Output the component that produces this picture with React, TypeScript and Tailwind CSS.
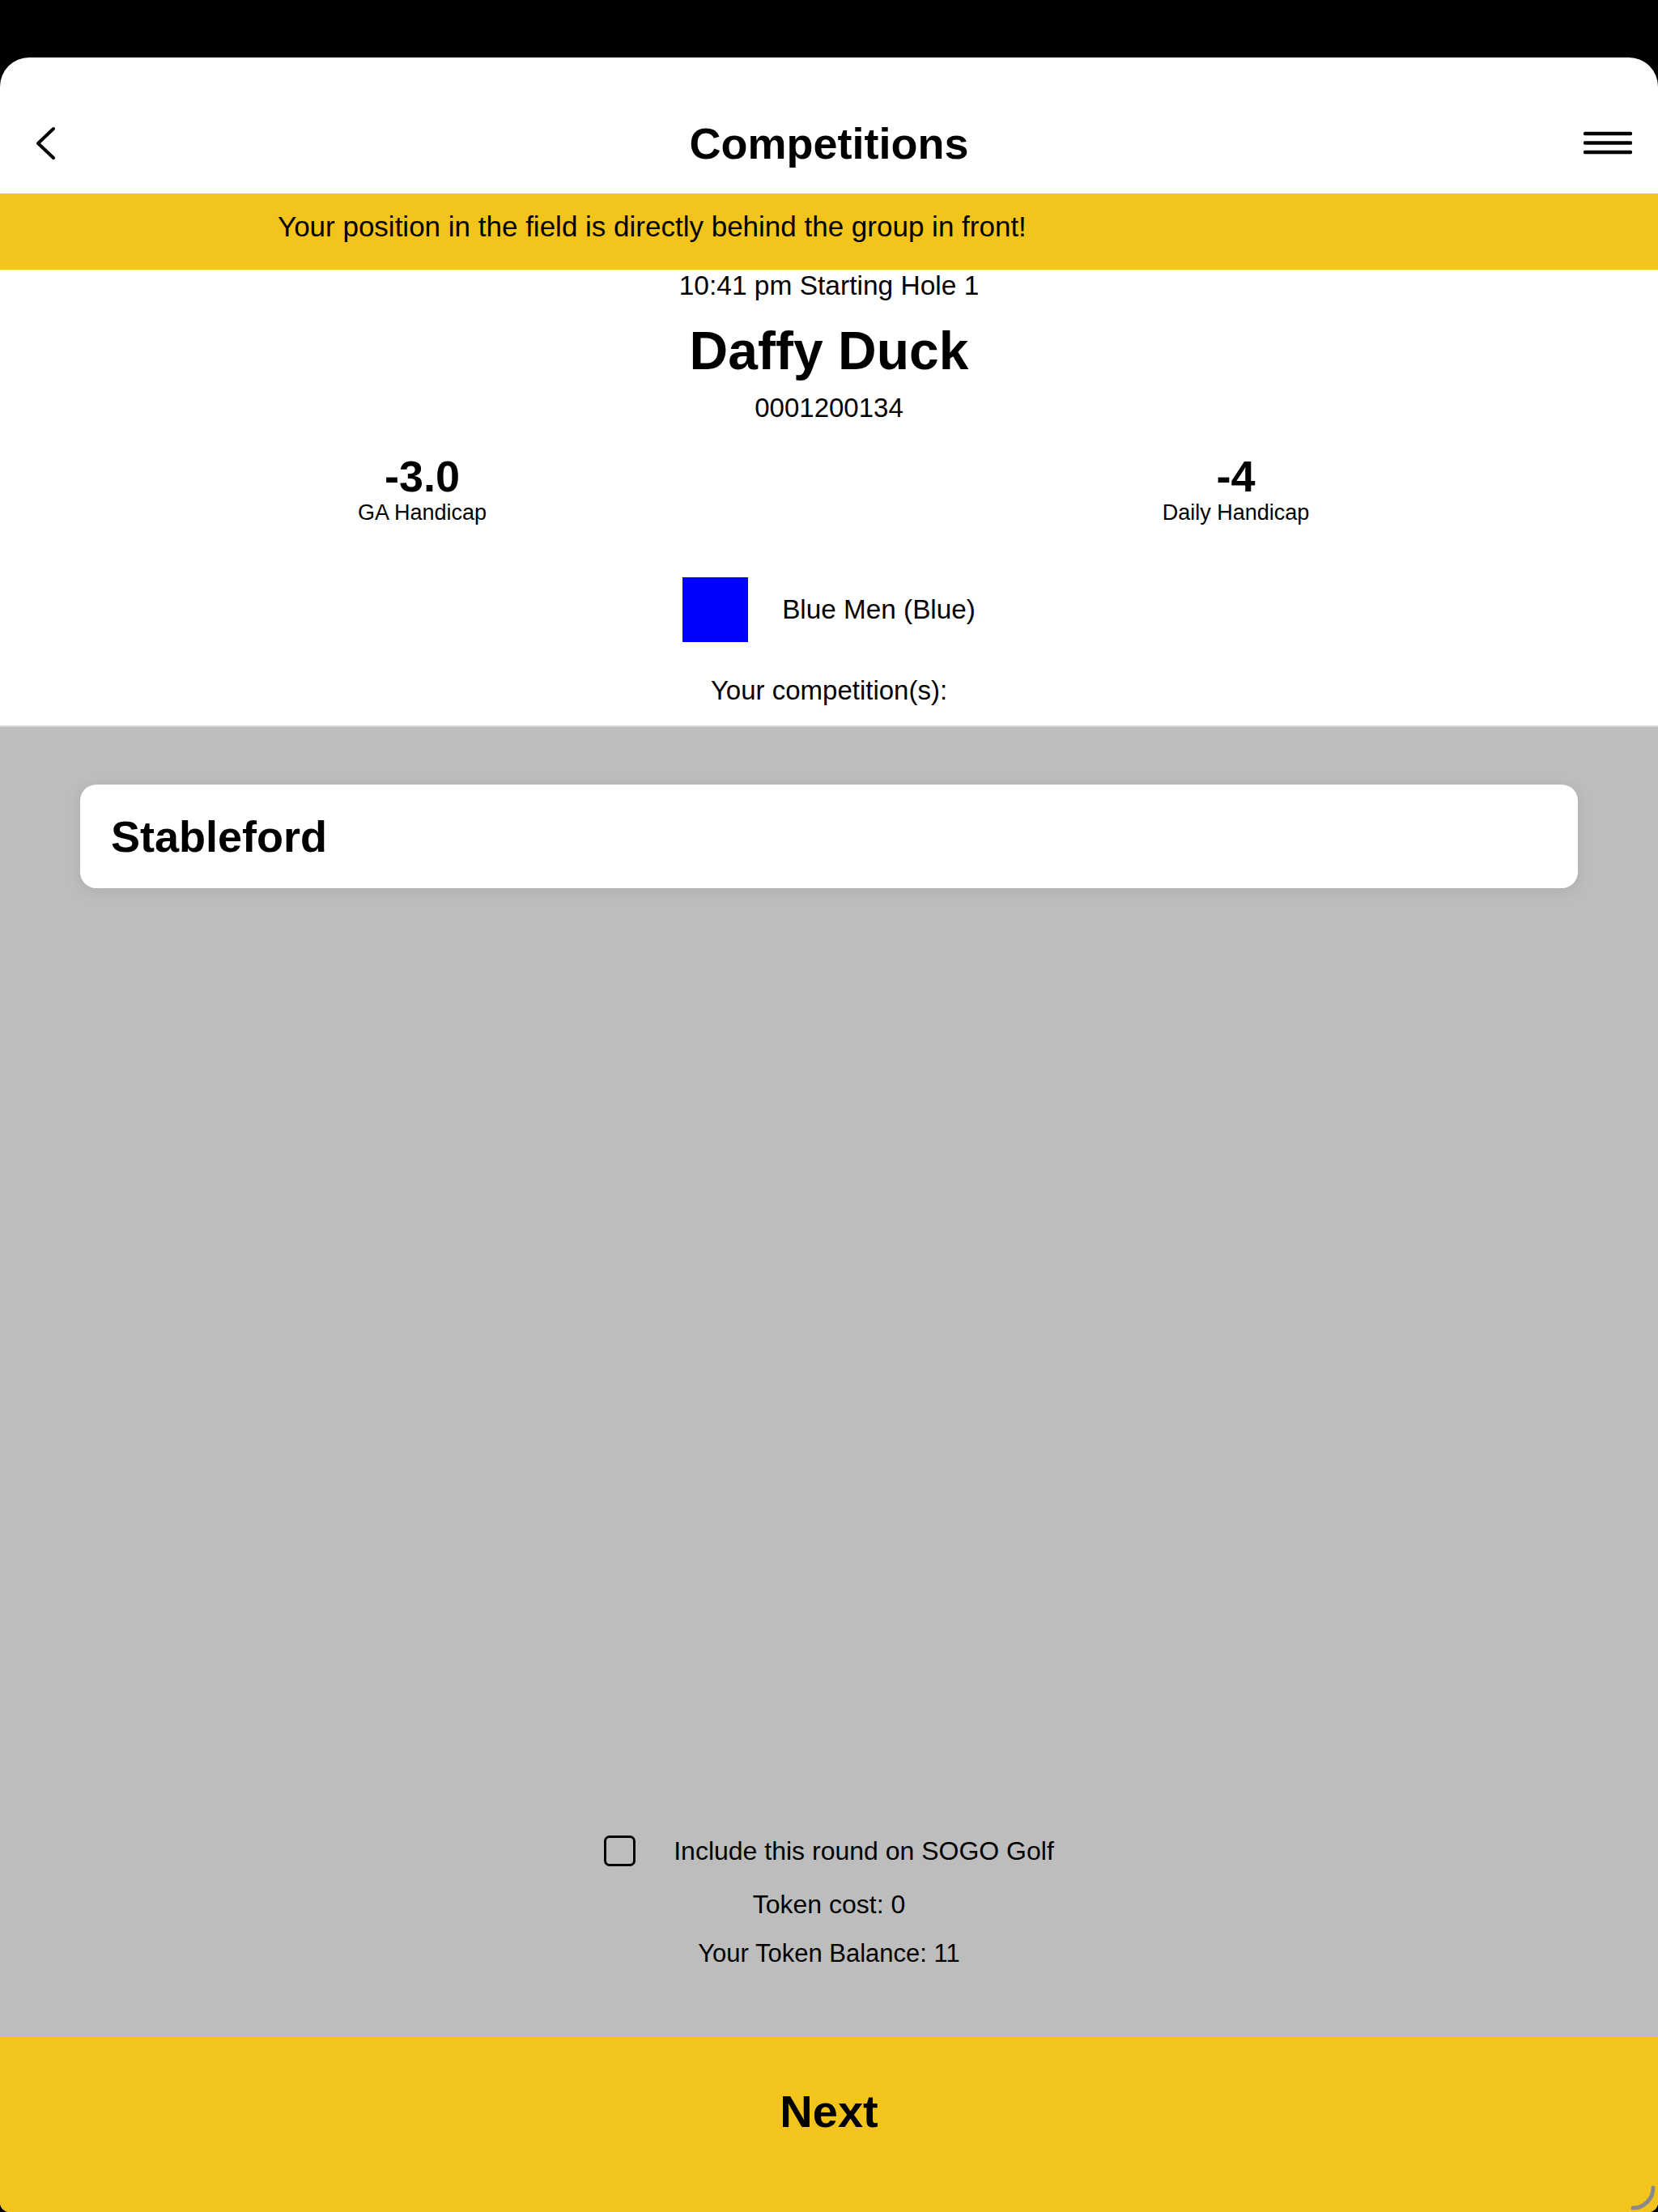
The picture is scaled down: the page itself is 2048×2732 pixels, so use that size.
import { useState } from "react";

const font = { fontFamily: '"Liberation Sans", Arial, sans-serif' };

const App = () => {
  const [includeSogo, setIncludeSogo] = useState(false);

  return (
    <div className="h-screen bg-black flex flex-col pt-[71px] text-black" style={font}>
      <div className="relative flex-1 flex flex-col bg-white rounded-t-[36px] rounded-b-[12px] overflow-hidden">
        {/* header */}
        <div className="h-[168px] pt-[44px] grid grid-cols-[1fr_auto_1fr] items-center">
          <button className="justify-self-start pl-[44px]">
            <svg width="26" height="42" viewBox="0 0 26 42" fill="none" stroke="black" strokeWidth="4" strokeLinecap="round" strokeLinejoin="round">
              <polyline points="22,3 3,21 22,39" />
            </svg>
          </button>
          <h1 className="text-[54px] leading-[64px] font-bold">Competitions</h1>
          <button className="justify-self-end pr-[32px]">
            <svg width="60" height="32" viewBox="0 0 60 32" fill="none" stroke="black" strokeWidth="4.5" strokeLinecap="round">
              <line x1="2" y1="4" x2="58" y2="4" />
              <line x1="2" y1="15.5" x2="58" y2="15.5" />
              <line x1="2" y1="27" x2="58" y2="27" />
            </svg>
          </button>
        </div>

        {/* field position banner */}
        <div className="h-[94px] bg-[#f3c41c] flex items-center pl-[343px] pb-[12px]">
          <p className="text-[35px] leading-[40px]">Your position in the field is directly behind the group in front!</p>
        </div>

        {/* player info */}
        <div className="h-[563px] flex flex-col items-center">
          <p className="text-[33.5px] leading-[40px]">10:41 pm Starting Hole 1</p>
          <h2 className="mt-[20px] text-[66px] leading-[80px] font-bold">Daffy Duck</h2>
          <p className="mt-[11px] text-[33px] leading-[40px]">0001200134</p>

          <div className="mt-[44px] w-full px-[19px] grid grid-cols-2">
            <div className="flex flex-col items-center">
              <span className="text-[54px] leading-[40px] font-bold">-3.0</span>
              <span className="mt-[10px] text-[27px] leading-[30px]">GA Handicap</span>
            </div>
            <div className="flex flex-col items-center">
              <span className="text-[54px] leading-[40px] font-bold">-4</span>
              <span className="mt-[10px] text-[27px] leading-[30px]">Daily Handicap</span>
            </div>
          </div>

          <div className="mt-[65px] flex items-center gap-[42px]">
            <div className="w-[81px] h-[80px] bg-[#0000ff]" />
            <span className="text-[33.3px] leading-[40px]">Blue Men (Blue)</span>
          </div>

          <p className="mt-[40px] text-[33px] leading-[40px]">Your competition(s):</p>
        </div>

        {/* competitions list */}
        <div className="flex-1 flex flex-col bg-[#bdbdbd] border-t-2 border-[#d6d6d6]">
          <div className="mt-[71px] mx-[99px] h-[128px] bg-white rounded-[20px] shadow-[0_4px_18px_rgba(0,0,0,0.08)] flex items-center pl-[38px]">
            <span className="text-[54px] leading-[64px] font-bold">Stableford</span>
          </div>

          <div className="flex-1" />

          <div className="flex flex-col items-center pb-[82px]">
            <label className="h-[40px] flex items-center gap-[47px] cursor-pointer">
              <input
                type="checkbox"
                checked={includeSogo}
                onChange={() => setIncludeSogo(!includeSogo)}
                className="appearance-none w-[39px] h-[38px] border-[3px] border-black rounded-[7px] checked:bg-black"
              />
              <span className="text-[32px] leading-[40px]">Include this round on SOGO Golf</span>
            </label>
            <p className="mt-[26px] text-[32px] leading-[40px]">Token cost: 0</p>
            <p className="mt-[21px] text-[31px] leading-[40px]">Your Token Balance: 11</p>
          </div>
        </div>

        {/* next */}
        <button className="h-[217px] bg-[#f3c41c] flex justify-center pt-[61px]">
          <span className="text-[56px] leading-[64px] font-bold">Next</span>
        </button>

        <svg className="absolute right-0 bottom-0" width="40" height="40" viewBox="0 0 40 40" fill="none" stroke="#8a8a8a" strokeWidth="5" strokeLinecap="round">
          <path d="M34 10 A25 25 0 0 1 9 35" />
        </svg>
      </div>
    </div>
  );
};

export default App;
